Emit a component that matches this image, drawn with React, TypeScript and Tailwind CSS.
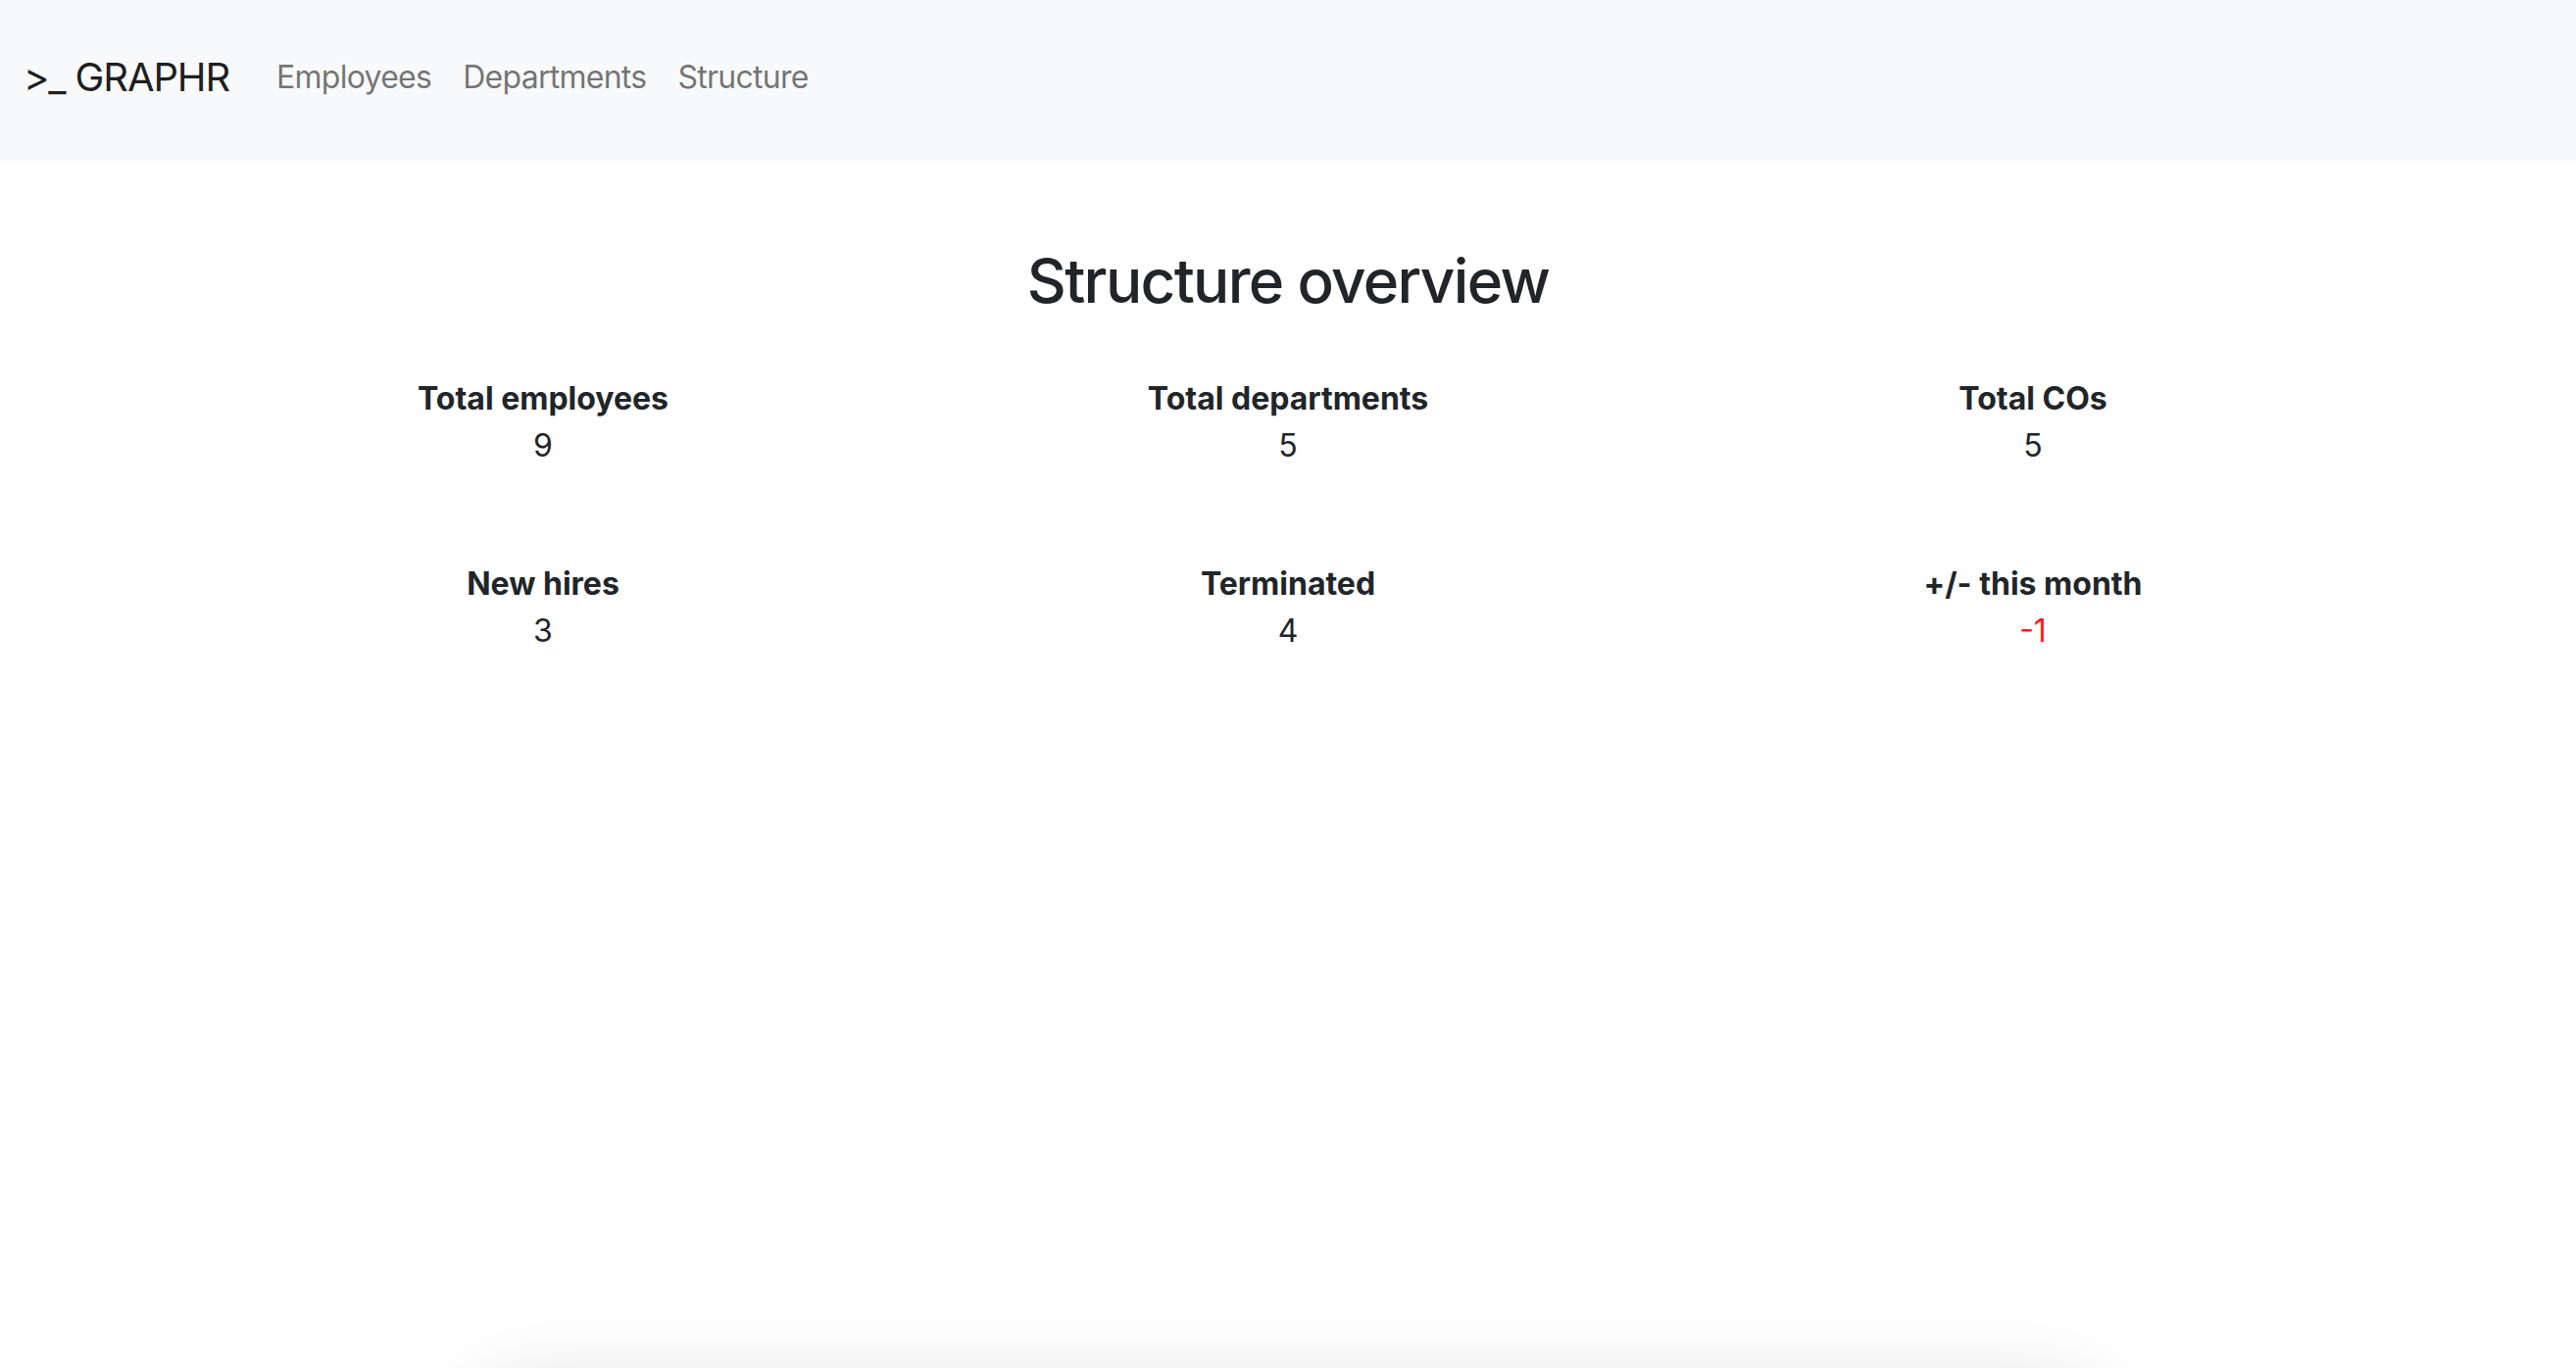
import React from 'react';

const STATS = [
  { label: 'Total employees', value: '9' },
  { label: 'Total departments', value: '5' },
  { label: 'Total COs', value: '5' },
  { label: 'New hires', value: '3' },
  { label: 'Terminated', value: '4' },
  { label: '+/- this month', value: '-1', negative: true },
];

const App: React.FC = () => {
  return (
    <div className="min-h-screen bg-white font-['Inter','Noto_Sans',sans-serif] text-[#212529] overflow-hidden">
      <nav className="h-[164px] bg-[#f8f9fa] flex items-center px-6 pb-[6px]">
        <a className="text-[40px] leading-[1.5] tracking-[-0.028em] text-black/90 mr-8 whitespace-pre">&gt;_ GRAPHR</a>
        <div className="flex items-center">
          {['Employees', 'Departments', 'Structure'].map((item) => (
            <a key={item} className="px-4 text-[32px] leading-[1.5] tracking-[-0.023em] text-black/55">
              {item}
            </a>
          ))}
        </div>
      </nav>

      <main className="flex flex-col items-center">
        <h2 className="mt-[86px] text-[62px] leading-[1.2] tracking-[-0.027em] font-medium text-center">
          Structure overview
        </h2>

        <div className="mt-[59px] w-[2280px] grid grid-cols-3 gap-y-[93px]">
          {STATS.map((s) => (
            <div key={s.label} className="text-center text-[32px] leading-[1.5]">
              <div className="font-bold">{s.label}</div>
              <div className={s.negative ? 'text-[#ff1a1a]' : ''}>{s.value}</div>
            </div>
          ))}
        </div>

        {/* card below the fold, only its shadow shows */}
        <div className="mt-[732px] w-[1630px] h-[600px] bg-white rounded-[12px] shadow-[0_32px_96px_rgba(0,0,0,0.22)]" />
      </main>
    </div>
  );
};

export default App;
